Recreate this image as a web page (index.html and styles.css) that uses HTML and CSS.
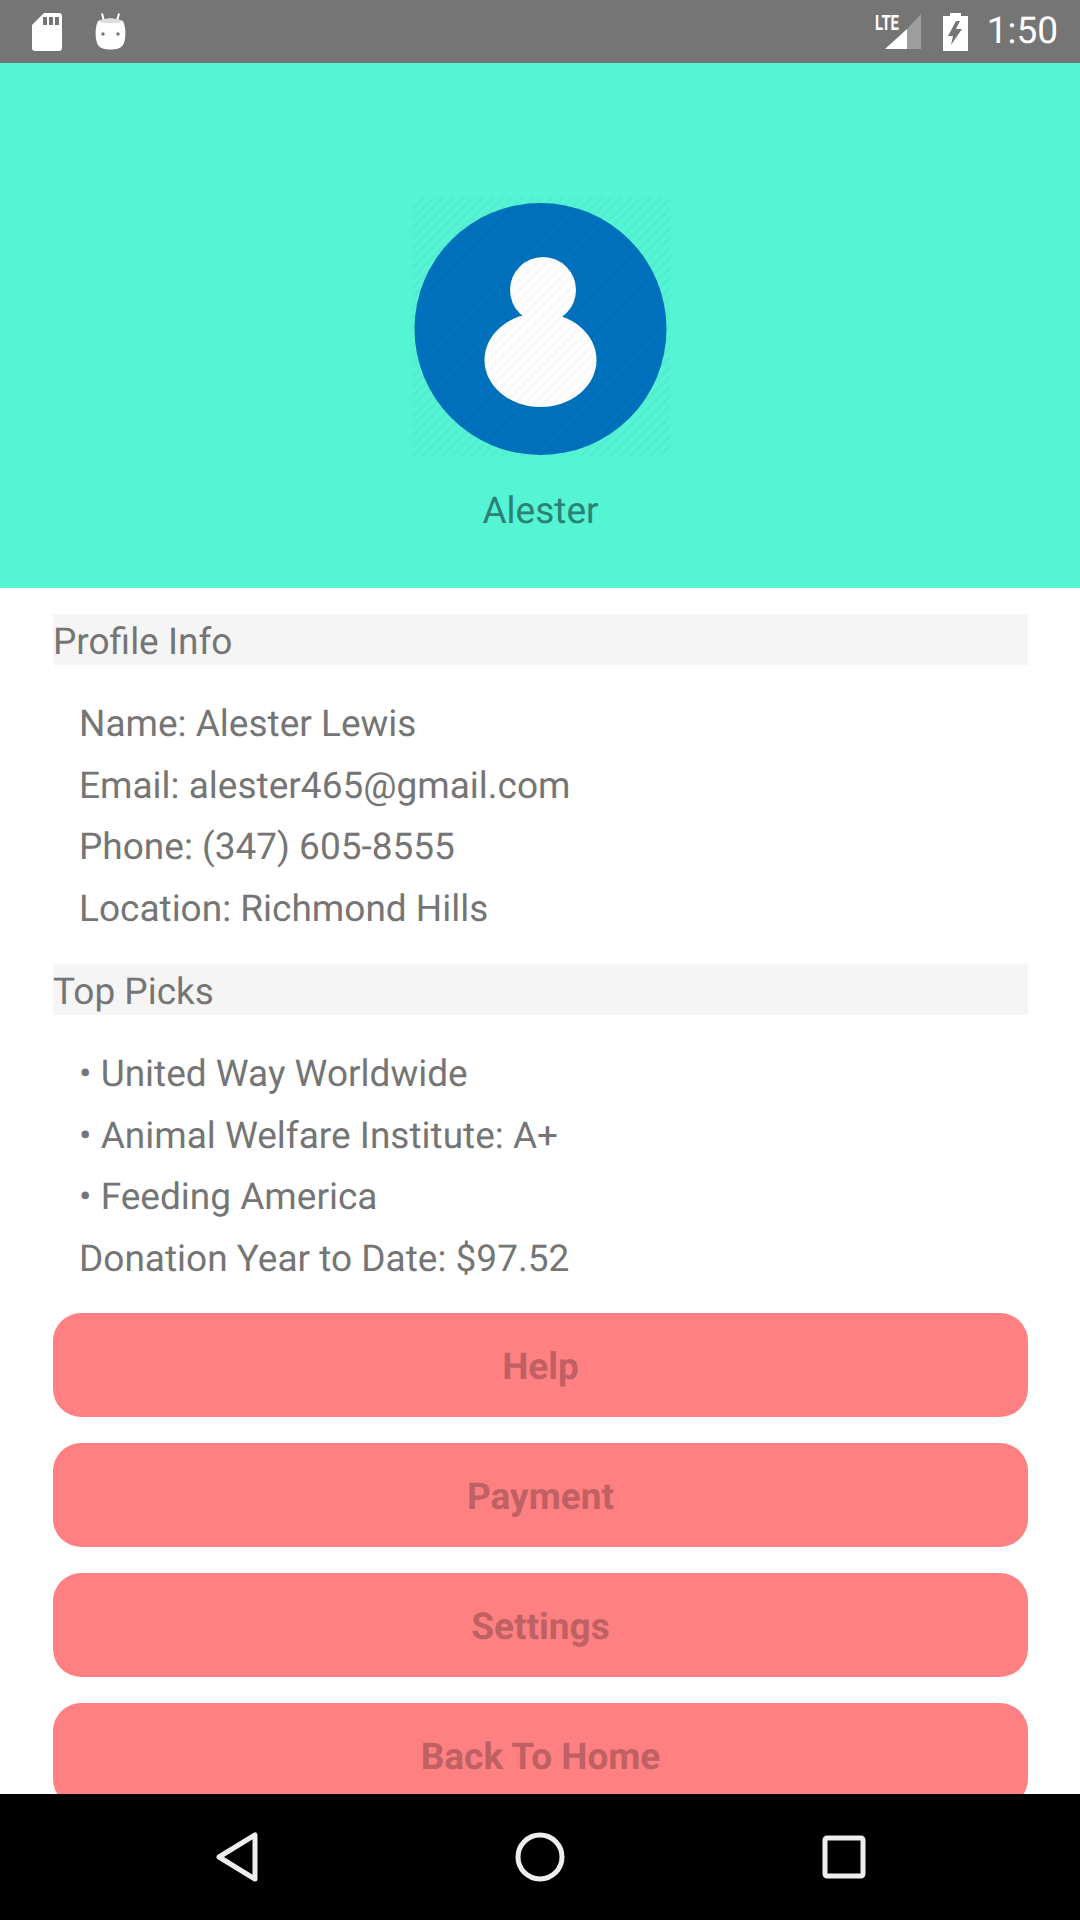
FILE: index.html
```html
<!DOCTYPE html>
<html lang="en">
<head>
    <meta charset="UTF-8">
    <meta name="viewport" content="width=device-width, initial-scale=1.0">
    <title>Profile</title>
    <link rel="stylesheet" href="styles.css">
</head>
<body>
    <header class="status-bar">
        <div class="status-left">
            <svg class="icon-sd" viewBox="0 0 30 38" width="30" height="38">
                <path fill="#fff" d="M12 0H27a3 3 0 0 1 3 3V35a3 3 0 0 1-3 3H3a3 3 0 0 1-3-3V12Z"/>
                <path fill="#757575" d="M11 4h4v8h-4zM17 4h4v8h-4zM23 4h4v8h-4z"/>
            </svg>
            <svg class="icon-bot" viewBox="0 0 31 37" width="31" height="37">
                <path stroke="#fff" stroke-width="2" d="M7 0.500L9 8M24 0.500L22 8"/>
                <path fill="#fff" d="M3 8C10 4.500 21 4.500 28 8C31 14 31 24 29 30C27 36 20 36.500 15.500 36.500C11 36.500 4 36 2 30C0 24 0 14 3 8Z"/>
                <path fill="#ddd" d="M3 8C10 4.500 21 4.500 28 8C25 11 6 11 3 8Z"/>
                <circle cx="8" cy="21" r="1.700" fill="#757575"/>
                <circle cx="23" cy="21" r="1.700" fill="#757575"/>
            </svg>
        </div>
        <div class="status-right">
            <svg class="icon-signal" viewBox="0 -6 47 50" width="47" height="50">
                <text x="0" y="17" class="lte-label" textLength="24" lengthAdjust="spacingAndGlyphs">LTE</text>
                <path fill="#fff" d="M10 36 32 16V36Z"/>
                <path fill="#9e9e9e" d="M32 16 46 1V36H32Z"/>
            </svg>
            <svg class="icon-battery" viewBox="0 0 25 38" width="25" height="38">
                <path fill="#fff" d="M7 0H18V3H25V38H0V3H7Z"/>
                <path fill="#757575" d="M13 8 5 23H10L8 32 19 16H13L17 8Z"/>
            </svg>
            <span class="clock">1:50</span>
        </div>
    </header>

    <main class="content">
        <section class="hero">
            <svg class="avatar" viewBox="0 0 258 260" width="258" height="260">
                <defs>
                    <pattern id="hatch" width="7" height="7" patternUnits="userSpaceOnUse" patternTransform="rotate(45)">
                        <rect width="3" height="7" fill="#000" fill-opacity="0.025"/>
                    </pattern>
                </defs>
                <circle cx="128.500" cy="132" r="126" fill="#0071bc"/>
                <circle cx="131" cy="93" r="33" fill="#fff"/>
                <ellipse cx="128.500" cy="163" rx="56" ry="47" fill="#fff"/>
                <rect width="258" height="260" fill="url(#hatch)"/>
            </svg>
            <p class="hero-name">Alester</p>
        </section>

        <section class="details">
            <h2 class="section-title">Profile Info</h2>
            <ul class="info-list">
                <li>Name: Alester Lewis</li>
                <li>Email: alester465@gmail.com</li>
                <li>Phone: (347) 605-8555</li>
                <li>Location: Richmond Hills</li>
            </ul>
            <h2 class="section-title">Top Picks</h2>
            <ul class="info-list">
                <li>&bull; United Way Worldwide</li>
                <li>&bull; Animal Welfare Institute: A+</li>
                <li>&bull; Feeding America</li>
                <li>Donation Year to Date: $97.52</li>
            </ul>
            <div class="actions">
                <a href="#" class="btn">Help</a>
                <a href="#" class="btn">Payment</a>
                <a href="#" class="btn">Settings</a>
                <a href="#" class="btn">Back To Home</a>
            </div>
        </section>
    </main>

    <nav class="nav-bar">
        <svg viewBox="0 0 42 50" width="42" height="50">
            <path class="nav-stroke" d="M39 3V47L3 25Z"/>
        </svg>
        <svg viewBox="0 0 50 50" width="50" height="50">
            <circle class="nav-stroke" cx="25" cy="25" r="22"/>
        </svg>
        <svg viewBox="0 0 44 44" width="44" height="44">
            <rect class="nav-stroke" x="3" y="3" width="38" height="38" rx="2"/>
        </svg>
    </nav>
</body>
</html>
```

FILE: styles.css
```css
/* General Styles */
html, body {
    margin: 0;
    padding: 0;
}

body {
    font-family: Roboto, "Noto Sans", sans-serif;
    text-rendering: geometricPrecision;
    width: 1080px;
    height: 1920px;
    display: flex;
    flex-direction: column;
    overflow: hidden;
    background-color: #ffffff;
    color: #757575;
}

/* Status Bar */
.status-bar {
    height: 63px;
    flex: none;
    display: flex;
    align-items: center;
    justify-content: space-between;
    background-color: #757575;
    padding: 0 22px 0 32px;
}

.status-left {
    display: flex;
    align-items: center;
    gap: 33px;
}

.status-right {
    display: flex;
    align-items: center;
}

.icon-battery {
    margin-left: 21px;
}

.lte-label {
    font-family: Roboto, sans-serif;
    font-size: 21px;
    font-weight: 700;
    fill: #ffffff;
}

.clock {
    margin-left: 19px;
    font-size: 37px;
    color: #ffffff;
}

/* Middle Content */
.content {
    flex: 1;
    min-height: 0;
    overflow: hidden;
}

.hero {
    height: 525px;
    display: flex;
    flex-direction: column;
    align-items: center;
    padding: 134px 0 0 1px;
    box-sizing: border-box;
    background-color: #54f4d4;
}

.hero-name {
    margin: 33px 0 0;
    font-size: 37px;
    line-height: 44px;
    color: #2a8274;
}

.details {
    padding: 26px 52px 0 53px;
}

.section-title {
    margin: 0;
    height: 51px;
    font-size: 37px;
    font-weight: 400;
    line-height: 57px;
    background-color: #f5f5f5;
}

.info-list {
    list-style: none;
    margin: 0;
    padding: 29px 0 24px 26px;
    font-size: 37px;
    line-height: 61.500px;
}

/* Buttons */
.actions {
    display: flex;
    flex-direction: column;
    gap: 26px;
    margin-top: -1px;
}

.btn {
    height: 104px;
    box-sizing: border-box;
    padding-top: 4px;
    display: flex;
    align-items: center;
    justify-content: center;
    border-radius: 28px;
    background-color: #ff8082;
    color: #bf6062;
    font-size: 37px;
    font-weight: 700;
    text-decoration: none;
}

/* Bottom Navigation */
.nav-bar {
    height: 126px;
    flex: none;
    display: flex;
    align-items: center;
    justify-content: space-between;
    box-sizing: border-box;
    padding: 0 214px 0 216px;
    background-color: #000000;
}

.nav-stroke {
    fill: none;
    stroke: #eeeeee;
    stroke-width: 5;
    stroke-linejoin: round;
}
```
